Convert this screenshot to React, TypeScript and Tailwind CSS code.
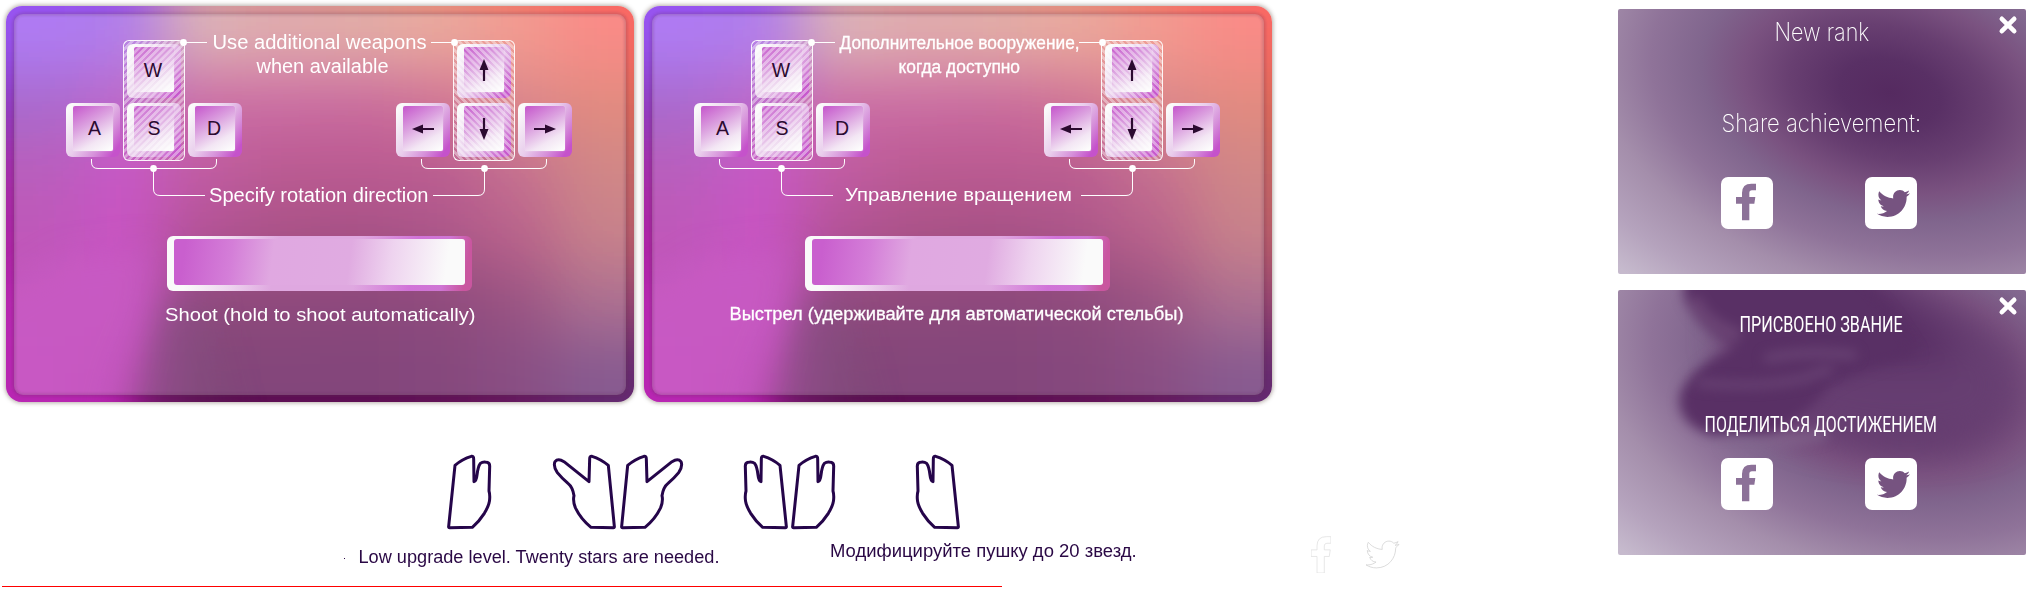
import React, { useLayoutEffect, useRef, useState } from "react";
import { FaTwitter } from "react-icons/fa";

/* Single line of text, squeezed or stretched horizontally to a set width. */
function FitText({ width, className, children }: { width: number; className?: string; children: string }) {
  const ref = useRef<HTMLSpanElement>(null);
  const [scale, setScale] = useState(1);
  useLayoutEffect(() => {
    const el = ref.current;
    if (el && el.offsetWidth > 0) setScale(width / el.offsetWidth);
  }, [width, children]);
  return (
    <div className={"flex justify-center whitespace-nowrap " + (className ?? "")} style={{ width }}>
      <span ref={ref} className="shrink-0" style={{ transform: `scaleX(${scale})` }}>
        {children}
      </span>
    </div>
  );
}

const mesh: string[][] = [
  ["#ae7af4", "#b07ceb", "#dcb2b6", "#e0aaac", "#e2aca6", "#eaa89c", "#f39a8f", "#fa8a86"],
  ["#a868cc", "#be66c6", "#ca69a2", "#ca6aa2", "#c9689d", "#ce7094", "#d9858a", "#e18a7e"],
  ["#b95cbb", "#c855c6", "#c05aa2", "#ba5890", "#ba5890", "#ba5a90", "#c46e8f", "#d08686"],
  ["#bf55b9", "#c852c3", "#b25094", "#a95086", "#a54f84", "#ab5488", "#b8608a", "#c7808a"],
  ["#c454be", "#c653c0", "#8e487b", "#8c477a", "#8a467a", "#8c487b", "#985181", "#ac6e90"],
  ["#c750c0", "#bc4eb5", "#804377", "#82447a", "#82447a", "#84467b", "#884c82", "#86588f"],
];

function Backdrop({ id }: { id: string }) {
  return (
    <svg className="col-start-1 row-start-1 rounded-[16px] shadow-[0_0_4px_1px_rgba(90,70,60,0.45)]" width="628" height="396" viewBox="0 0 628 396">
      <defs>
        <filter id={id} filterUnits="userSpaceOnUse" x="-100" y="-100" width="828" height="596" colorInterpolationFilters="sRGB">
          <feGaussianBlur stdDeviation="30" />
          <feComponentTransfer>
            <feFuncR type="linear" slope="1.28" intercept="-0.28" />
            <feFuncG type="linear" slope="1.28" intercept="-0.28" />
            <feFuncB type="linear" slope="1.28" intercept="-0.28" />
          </feComponentTransfer>
        </filter>
        <filter id={id + "s"} filterUnits="userSpaceOnUse" x="-120" y="0" width="500" height="596" colorInterpolationFilters="sRGB">
          <feGaussianBlur stdDeviation="15" />
        </filter>
        <filter id={id + "e"} filterUnits="userSpaceOnUse" x="0" y="0" width="628" height="396">
          <feGaussianBlur stdDeviation="1.5" />
        </filter>
      </defs>
      <g filter={`url(#${id})`}>
        {mesh.map((row, r) =>
          row.map((fill, c) => {
            const x = c === 0 ? -100 : c * 78.5;
            const y = r === 0 ? -100 : r * 66;
            const w = c === 0 || c === 7 ? 180 : 80;
            const h = r === 0 || r === 5 ? 168 : 68;
            return <rect key={`${r}-${c}`} x={x} y={y} width={w} height={h} fill={fill} />;
          }),
        )}
      </g>
      <g filter={`url(#${id}s)`}>
        <path d="M160 300 L200 290 L235 430 L120 440 Z" fill="#5c1a55" opacity="0.5" />
        <path d="M-80 330 L60 250 L152 240 L140 310 L116 370 L98 450 L-80 450 Z" fill="#b92cb4" opacity="0.6" />
      </g>
      <rect x="8" y="8" width="612" height="381" rx="9" fill="#fff" fillOpacity="0.23" />
      <rect x="8" y="8" width="612" height="381" rx="9" fill="none" stroke="#5b2a50" strokeOpacity="0.45" strokeWidth="1.6" filter={`url(#${id}e)`} />
    </svg>
  );
}

function Arrow({ turn }: { turn: string }) {
  return (
    <svg width="24" height="24" viewBox="0 0 24 24" className={"relative z-20 " + turn}>
      <path d="M12 23V9" stroke="#2b0a30" strokeWidth="2.2" fill="none" />
      <path d="M12 1L16.500 12H7.500Z" fill="#2b0a30" />
    </svg>
  );
}

function Key({ children, className }: { children: React.ReactNode; className: string }) {
  return (
    <div className={"h-[54px] w-[54px] rounded-[6px] bg-[linear-gradient(125deg,#fafafa_8%,#e9cdec_45%,#d690da_70%,#c552cb_90%)] pl-[7px] pt-[3px] " + className}>
      <div className="flex h-[45px] w-[40px] items-center justify-center rounded-[2px] bg-[linear-gradient(150deg,#c85fce_5%,#dca3e0_40%,#f3e6f4_72%,#fcfcfc_95%)] font-['Liberation_Sans',Arial,sans-serif] text-[19.500px] leading-none text-[#2b0a30] shadow-[0_0_1px_rgba(255,255,255,0.8)]">
        {children}
      </div>
    </div>
  );
}

function Cluster({ side, className }: { side: "left" | "right"; className: string }) {
  const left = side === "left";
  return (
    <div className={"col-start-1 row-start-1 grid h-[162px] w-[176px] " + className}>
      <div className="col-start-1 row-start-1 mt-[4px] grid h-[113px] w-[176px] grid-cols-[54px_54px_54px] gap-x-[7px] gap-y-[5px]">
        <Key className="col-start-2 row-start-1">{left ? <span className="relative z-20 mr-[2px] mt-[2px]">W</span> : <Arrow turn="" />}</Key>
        <Key className="col-start-1 row-start-2">{left ? <span className="relative z-20 ml-[3px] mt-px">A</span> : <Arrow turn="-rotate-90" />}</Key>
        <Key className="col-start-2 row-start-2">{left ? <span className="relative z-20 mt-px">S</span> : <Arrow turn="rotate-180" />}</Key>
        <Key className="col-start-3 row-start-2">{left ? <span className="relative z-20 mr-[2px] mt-px">D</span> : <Arrow turn="rotate-90" />}</Key>
      </div>
      <div
        className={
          "z-10 col-start-1 row-start-1 ml-[57px] h-[121px] w-[62px] rounded-[6px] border border-white/90 " +
          (left
            ? "bg-[repeating-linear-gradient(135deg,rgba(255,255,255,0.42)_0px,rgba(255,255,255,0.42)_2.2px,rgba(255,255,255,0.04)_2.8px,rgba(255,255,255,0.04)_4.3px,rgba(255,255,255,0.42)_4.8px)]"
            : "bg-[repeating-linear-gradient(45deg,rgba(255,255,255,0.42)_0px,rgba(255,255,255,0.42)_2.2px,rgba(255,255,255,0.04)_2.8px,rgba(255,255,255,0.04)_4.3px,rgba(255,255,255,0.42)_4.8px)]")
        }
      />
      <svg className="z-20 col-start-1 row-start-1 overflow-visible" width="176" height="162" viewBox="0 0 176 162" fill="none" stroke="#fff" strokeWidth="1">
        <path d="M25.500 119V122Q25.500 128.500 32 128.500H144Q150.500 128.500 150.500 122V119" />
        {left ? (
          <>
            <path d="M117 2.500H141M87.500 128.500V149Q87.500 155.500 94 155.500H139" />
            <circle cx="117.500" cy="2.500" r="3.400" fill="#fff" stroke="none" />
            <circle cx="87.500" cy="128.500" r="3.400" fill="#fff" stroke="none" />
          </>
        ) : (
          <>
            <path d="M58 2.500H35M88.500 128.500V149Q88.500 155.500 82 155.500H37" />
            <circle cx="58.500" cy="2.500" r="3.400" fill="#fff" stroke="none" />
            <circle cx="88.500" cy="128.500" r="3.400" fill="#fff" stroke="none" />
          </>
        )}
      </svg>
    </div>
  );
}

function ControlsPanel({ id, wide, children }: { id: string; wide?: boolean; children: React.ReactNode }) {
  return (
    <section className="grid h-[396px] w-[628px] shrink-0 text-white">
      <Backdrop id={id} />
      <Cluster side="left" className={wide ? "ml-[50px] mt-[34px]" : "ml-[60px] mt-[34px]"} />
      <Cluster side="right" className={wide ? "ml-[400px] mt-[34px]" : "ml-[390px] mt-[34px]"} />
      <div className="z-30 col-start-1 row-start-1 flex flex-col items-center pt-[24px] font-['Liberation_Sans',Arial,sans-serif] leading-6">
        {children}
      </div>
    </section>
  );
}

function SpaceBar() {
  return (
    <div className="mr-px mt-[29px] h-[55px] w-[305px] rounded-[6px] bg-[linear-gradient(100deg,#fafafa_8%,#eed6ef_22%,#dfa8e0_36%,#dfa8e0_62%,#d173d8_80%,#cf76d4_90%,#c9569f_97%)] pl-[7px] pt-[3px]">
      <div className="h-[46px] w-[291px] rounded-[3px] bg-[linear-gradient(98deg,#c95fce_4%,#d47ed8_20%,#e0a8e1_34%,#e0abe1_60%,#eed3ef_74%,#fafafa_93%)]" />
    </div>
  );
}

const FB = "M18 112V62H0V42H18V30Q18 2 46 2H60V22H48Q40 22 40 30V42H58L55 62H40V112Z";

function FacebookTile() {
  return (
    <div className="h-[52px] w-[52px] rounded-[7px] bg-white pl-[15px] pt-[6px]">
      <svg width="20" height="37.500" viewBox="0 0 60 112.500">
        <path d={FB} fill="#8c7198" />
      </svg>
    </div>
  );
}

function TwitterTile() {
  return (
    <div className="h-[52px] w-[52px] rounded-[7px] bg-white pl-[12px] pt-[10px]">
      <FaTwitter className="h-[33px] w-[33px] text-[#765380]" />
    </div>
  );
}

function RankCard({ id, smoke, children }: { id: string; smoke?: boolean; children: React.ReactNode }) {
  return (
    <section className="relative grid h-[265px] w-[408px] overflow-hidden rounded-[2px] text-white">
      <svg className="col-start-1 row-start-1" width="408" height="265" viewBox="0 0 408 265">
        <defs>
          <radialGradient id={id} gradientUnits="userSpaceOnUse" cx="0" cy="0" r="2.75" gradientTransform="translate(272 84) rotate(14) scale(155 100)">
            <stop offset="0" stopColor="#552a60" />
            <stop offset="0.120" stopColor="#593065" />
            <stop offset="0.240" stopColor="#683f71" />
            <stop offset="0.350" stopColor="#7a5280" />
            <stop offset="0.450" stopColor="#80658d" />
            <stop offset="0.570" stopColor="#8f7399" />
            <stop offset="0.710" stopColor="#a48eab" />
            <stop offset="0.870" stopColor="#b5a3bd" />
            <stop offset="1" stopColor="#c6bacd" />
          </radialGradient>
          <filter id={id + "b"} filterUnits="userSpaceOnUse" x="-60" y="-80" width="560" height="400" colorInterpolationFilters="sRGB">
            <feGaussianBlur stdDeviation="6" />
          </filter>
          <filter id={id + "w"} filterUnits="userSpaceOnUse" x="-60" y="-80" width="660" height="400" colorInterpolationFilters="sRGB">
            <feGaussianBlur stdDeviation="18" />
          </filter>
        </defs>
        <rect width="408" height="265" fill={`url(#${id})`} />
        {smoke && (
          <>
            <g filter={`url(#${id}w)`}>
              <path d="M110 -40H250Q310 10 390 60Q410 120 370 145Q300 165 200 145Q120 120 110 60Z" fill="#673f72" opacity="0.9" />
              <path d="M120 -30H230Q290 20 350 68Q280 72 120 60Z" fill="#562c62" />
            </g>
            <g filter={`url(#${id}b)`}>
              <path d="M66 -14H240Q280 30 300 66Q240 80 210 98Q190 125 150 145H92Q57 132 62 104Q74 74 120 56Q80 42 66 8Z" fill="#593065" />
              <path d="M76 8Q86 34 122 46" stroke="#6c4575" strokeWidth="12" fill="none" />
            </g>
            <g filter={`url(#${id}b)`} fill="none" strokeLinecap="round">
              <path d="M150 68Q190 60 235 65" stroke="#6b4576" strokeWidth="8" />
              <path d="M82 93Q140 99 188 88Q200 82 212 80" stroke="#6b4576" strokeWidth="7" />
              <path d="M110 154Q160 154 205 145" stroke="#83688f" strokeWidth="9" opacity="0.800" />
            </g>
          </>
        )}
      </svg>
      <div className="z-10 col-start-1 row-start-1 flex flex-col items-center">{children}</div>
      <div className="z-10 col-start-1 row-start-1 ml-[103px] mt-[168px] flex items-start gap-[92px]">
        <FacebookTile />
        <TwitterTile />
      </div>
      <svg className="absolute right-[8px] top-[6px] z-20" width="20" height="20" viewBox="0 0 20 20" stroke="#fff" strokeWidth="4.600" strokeLinecap="round">
        <path d="M3.800 3.800L16.200 16.200M16.200 3.800L3.800 16.200" />
      </svg>
    </section>
  );
}

function FoldedHand({ className }: { className: string }) {
  return (
    <svg className={"shrink-0 overflow-visible " + className} width="44" height="74" viewBox="0 0 132 222" fill="none" stroke="#25054a" strokeWidth="9" strokeLinejoin="round" strokeLinecap="round">
      <path d="M5 214L24 31Q46 12 73 4Q80 3 80 12L81 80Q88 78 90 60Q93 34 100 25Q108 19 120 22Q129 24 128 36L126 108Q129 118 128 132Q128 148 112 175Q96 200 76 217L8 218Q4 218 5 214Z" />
    </svg>
  );
}

function OpenHand({ className }: { className: string }) {
  return (
    <svg className={"shrink-0 overflow-visible " + className} width="62" height="74" viewBox="0 0 186 222" fill="none" stroke="#25054a" strokeWidth="9" strokeLinejoin="round" strokeLinecap="round">
      <path d="M5 214L23 31Q46 12 72 4Q79 3 79 12L81 80L156 20Q174 9 183 20Q189 34 176 53Q164 68 144 85Q130 96 126 122Q130 138 122 158Q106 192 75 217L8 218Q4 218 5 214Z" />
    </svg>
  );
}

export default function App() {
  return (
    <main className="flex h-[590px] w-[2035px] overflow-hidden bg-white">
      <div className="flex w-[1618px] shrink-0 flex-col">
        <div className="flex gap-[10px] pl-[6px] pt-[6px]">
          <ControlsPanel id="meshEn">
            <FitText width={214} className="text-[19.500px]">Use additional weapons</FitText>
            <FitText width={132} className="ml-[5px] text-[19.500px]">when available</FitText>
            <FitText width={220} className="mr-[2px] mt-[105px] text-[19.500px]">Specify rotation direction</FitText>
            <SpaceBar />
            <FitText width={311} className="mt-[12px] text-[19px]">Shoot (hold to shoot automatically)</FitText>
          </ControlsPanel>
          <ControlsPanel id="meshRu" wide>
            <FitText width={240} className="ml-[3px] mt-px text-[17.500px] [-webkit-text-stroke:0.3px_white]">Дополнительное вооружение,</FitText>
            <FitText width={122} className="ml-[2px] text-[17.500px] [-webkit-text-stroke:0.3px_white]">когда доступно</FitText>
            <FitText width={227} className="mt-[104px] text-[19px]">Управление вращением</FitText>
            <SpaceBar />
            <FitText width={454} className="mr-[3px] mt-[11px] text-[18px] [-webkit-text-stroke:0.3px_white]">Выстрел (удерживайте для автоматической стельбы)</FitText>
          </ControlsPanel>
        </div>

        <div className="flex h-[128px] items-start pl-[447px] pt-[53px]">
          <FoldedHand className="" />
          <OpenHand className="ml-[62.500px] -scale-x-100" />
          <OpenHand className="ml-[4px]" />
          <FoldedHand className="ml-[62px] -scale-x-100" />
          <FoldedHand className="ml-[3.500px]" />
          <FoldedHand className="ml-[80.500px] -scale-x-100" />
        </div>

        <div className="flex h-[56px] items-start pl-[344px] font-['Liberation_Sans',Arial,sans-serif] text-[17.500px] leading-6 text-[#2a0845]">
          <span className="mt-[28px] h-px w-px bg-[#2a0845]" />
          <FitText width={361} className="ml-[13px] mt-[15px]">Low upgrade level. Twenty stars are needed.</FitText>
          <FitText width={307} className="ml-[111px] mt-[9px]">Модифицируйте пушку до 20 звезд.</FitText>
          <svg className="ml-[174px] mt-[6px]" width="20" height="37" viewBox="0 0 60 112">
            <path d={FB} fill="none" stroke="#dadada" strokeWidth="2" />
          </svg>
          <FaTwitter className="ml-[35px] mt-[8px] h-[33px] w-[33px] overflow-visible fill-none stroke-[#d2d2d2] stroke-[12px]" />
        </div>
        <div className="ml-[2px] h-px w-[1000px] shrink-0 bg-[#ff0000]" />
      </div>

      <aside className="flex flex-col gap-4 pt-[9px]">
        <RankCard id="rankEn">
          <FitText width={95} className="mt-[8px] font-['Inter',sans-serif] text-[25px] font-extralight leading-[30px]">New rank</FitText>
          <FitText width={200} className="mr-[2px] mt-[61px] font-['Inter',sans-serif] text-[25px] font-extralight leading-[30px]">Share achievement:</FitText>
        </RankCard>
        <RankCard id="rankRu" smoke>
          <FitText width={163} className="mr-[2px] mt-[20px] font-['Roboto',sans-serif] text-[22px] font-normal leading-[30px]">ПРИСВОЕНО ЗВАНИЕ</FitText>
          <FitText width={232} className="mr-[3px] mt-[70px] font-['Roboto',sans-serif] text-[22px] font-normal leading-[30px]">ПОДЕЛИТЬСЯ ДОСТИЖЕНИЕМ</FitText>
        </RankCard>
      </aside>
    </main>
  );
}
